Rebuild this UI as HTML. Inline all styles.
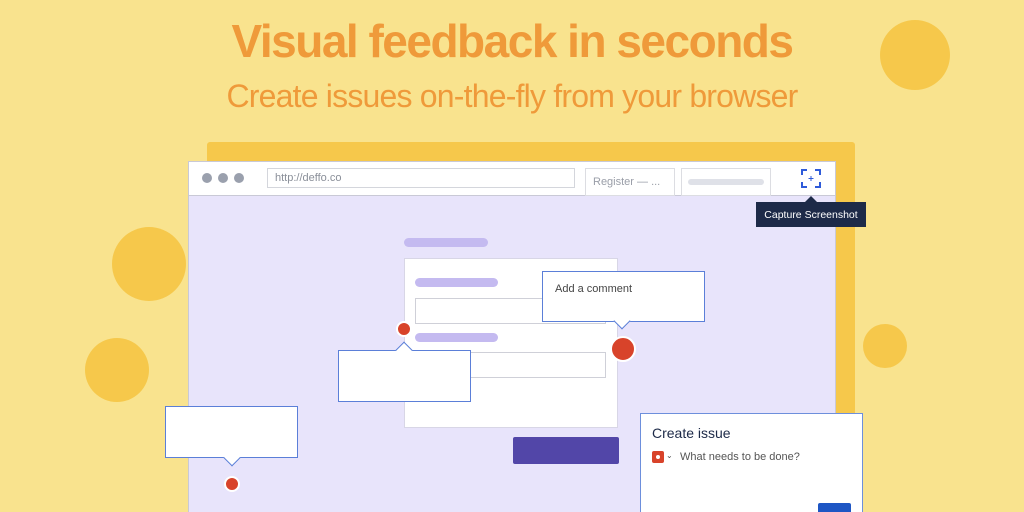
<!DOCTYPE html><html style="overflow:hidden;width:1024px;height:512px"><head><style>
html,body{margin:0;width:1024px;height:512px;overflow:hidden}
body{background:#f9e38e;font-family:"Liberation Sans",sans-serif;position:relative}
div{position:absolute;box-sizing:border-box}
.c{background:#f6c84b;border-radius:50%}
.bar{background:#c4baf0;border-radius:5px;height:9px}
.box{background:#fff;border:1.5px solid #5b7fd8}
.dot{background:#d8432a;border-radius:50%;border:2px solid #fff}
</style></head><body>
<div style="left:0;top:14px;width:1024px;text-align:center;font-size:46px;font-weight:bold;color:#ef9a3a;letter-spacing:-1.5px">Visual feedback in seconds</div>
<div style="left:0;top:78px;width:1024px;text-align:center;font-size:32px;color:#ef9a3a;letter-spacing:-0.8px">Create issues on-the-fly from your browser</div>
<div class="c" style="left:880px;top:20px;width:70px;height:70px"></div>
<div class="c" style="left:112px;top:227px;width:74px;height:74px"></div>
<div class="c" style="left:85px;top:338px;width:64px;height:64px"></div>
<div class="c" style="left:863px;top:324px;width:44px;height:44px"></div>
<div style="left:207px;top:142px;width:648px;height:370px;background:#f6c84b;border-radius:3px 3px 0 0"></div>
<div style="left:188px;top:161px;width:648px;height:351px;background:#e8e4fb;border:1px solid #c9c9d6;border-bottom:0"></div>
<div style="left:188px;top:161px;width:648px;height:35px;background:#fff;border:1px solid #c9c9d6"></div>
<div style="left:202px;top:173px;width:10px;height:10px;border-radius:50%;background:#9aa0ad"></div>
<div style="left:218px;top:173px;width:10px;height:10px;border-radius:50%;background:#9aa0ad"></div>
<div style="left:234px;top:173px;width:10px;height:10px;border-radius:50%;background:#9aa0ad"></div>
<div style="left:267px;top:168px;width:308px;height:20px;border:1px solid #d4d6dc;font-size:11px;color:#8a8f99;padding:3px 7px">http://deffo.co</div>
<div style="left:585px;top:168px;width:90px;height:28px;border:1px solid #dcdde2;font-size:11px;color:#9a9ea8;padding:7px 7px">Register — ...</div>
<div style="left:681px;top:168px;width:90px;height:28px;border:1px solid #dcdde2"></div>
<div style="left:688px;top:179px;width:76px;height:6px;border-radius:3px;background:#dfe1e8"></div>
<svg style="position:absolute;left:800px;top:168px" width="22" height="21" viewBox="0 0 22 21" fill="none" stroke="#2f5bd9" stroke-width="2"><path d="M2 7V2h5M15 2h5v5M20 14v5h-5M7 19H2v-5"/><path d="M11 8v5M8.5 10.5h5" stroke-width="1"/></svg>
<div style="left:805px;top:196px;width:0;height:0;border:6px solid transparent;border-bottom-color:#1d2a48;border-top:0"></div>
<div style="left:756px;top:202px;width:110px;height:25px;background:#1d2a48;color:#fff;font-size:10.5px;padding:7px 0;text-align:center">Capture Screenshot</div>
<div class="bar" style="left:404px;top:238px;width:84px"></div>
<div style="left:404px;top:258px;width:214px;height:170px;background:#fff;border:1px solid #d8d6e6"></div>
<div class="bar" style="left:415px;top:278px;width:83px"></div>
<div style="left:415px;top:298px;width:191px;height:26px;border:1px solid #cfd0d8"></div>
<div class="bar" style="left:415px;top:333px;width:83px"></div>
<div style="left:415px;top:352px;width:191px;height:26px;border:1px solid #cfd0d8"></div>
<div style="left:513px;top:437px;width:106px;height:27px;background:#5246a8;border-radius:2px"></div>
<div class="box" style="left:542px;top:271px;width:163px;height:51px;font-size:11px;color:#444;padding:11px 12px">Add a comment</div>
<div style="width:12px;height:12px;background:#fff;border-right:1.5px solid #5b7fd8;border-bottom:1.5px solid #5b7fd8;transform:rotate(45deg);top:315px;left:616px"></div>
<div class="dot" style="left:610px;top:336px;width:26px;height:26px"></div>
<div class="box" style="left:338px;top:350px;width:133px;height:52px"></div>
<div style="left:398px;top:344px;width:12px;height:12px;background:#fff;border-left:1.5px solid #5b7fd8;border-top:1.5px solid #5b7fd8;transform:rotate(45deg)"></div>
<div class="dot" style="left:396px;top:321px;width:16px;height:16px"></div>
<div class="box" style="left:165px;top:406px;width:133px;height:52px"></div>
<div style="left:226px;top:452px;width:12px;height:12px;background:#fff;border-right:1.5px solid #5b7fd8;border-bottom:1.5px solid #5b7fd8;transform:rotate(45deg)"></div>
<div class="dot" style="left:224px;top:476px;width:16px;height:16px"></div>
<div class="box" style="left:640px;top:413px;width:223px;height:99px;border-color:#6d8fdc;border-bottom:0"></div>
<div style="left:652px;top:425px;font-size:14px;color:#1d2a48">Create issue</div>
<div style="left:652px;top:451px;width:12px;height:12px;background:#d8432a;border-radius:2px"></div>
<div style="left:656px;top:455px;width:4px;height:4px;background:#fff;border-radius:50%"></div>
<div style="left:666px;top:451px;font-size:8px;color:#555">⌄</div>
<div style="left:680px;top:451px;font-size:11px;color:#555">What needs to be done?</div>
<div style="left:818px;top:503px;width:33px;height:9px;background:#1e56c4;border-radius:2px 2px 0 0"></div>
</body></html>
